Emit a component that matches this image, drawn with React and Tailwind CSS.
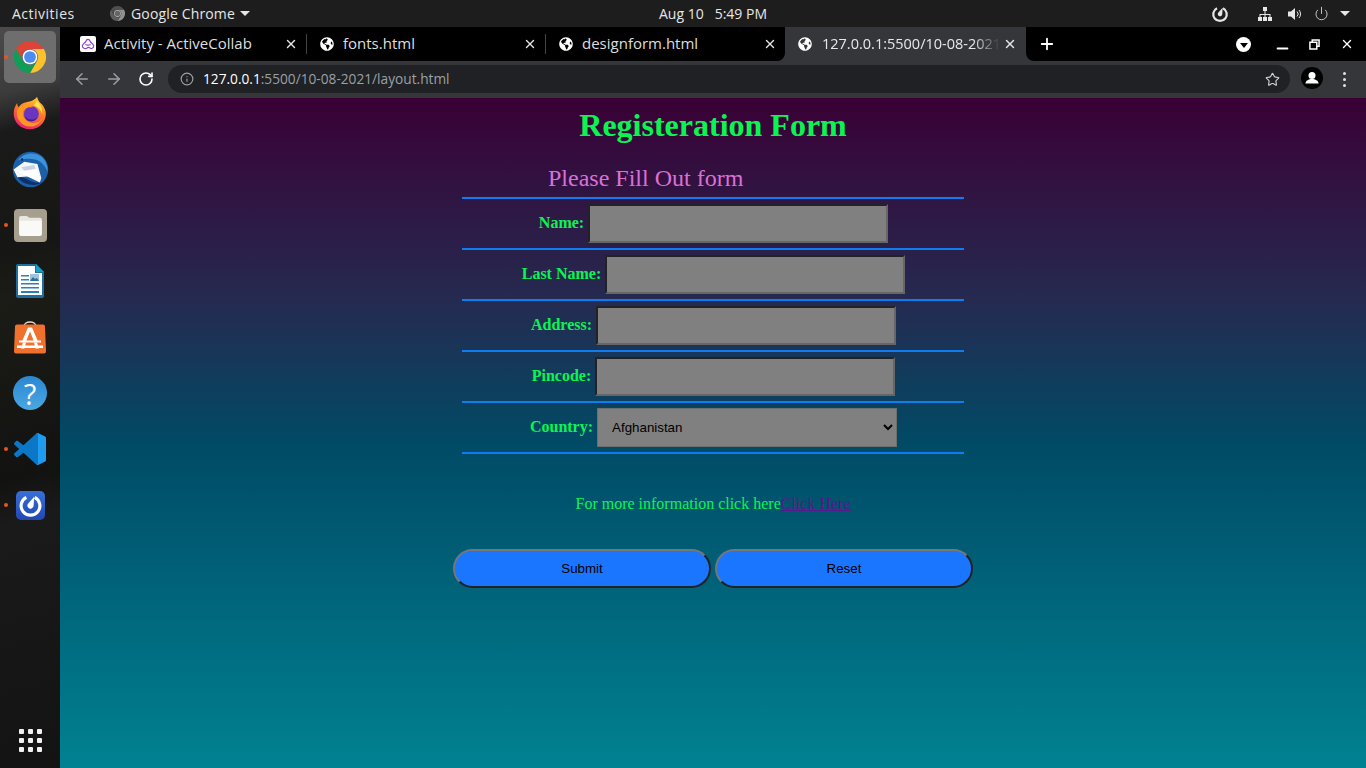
import { ArrowLeft, ArrowRight, Info, Minus, Plus, Power, RotateCw, Star, X } from 'lucide-react'
import { FaGlobeAmericas } from 'react-icons/fa'

const ChromeIcon = ({ className }) => (
  <svg viewBox="0 0 48 48" className={className}>
    <path fill="#db4437" d="M3.2 12A24 24 0 0 1 44.8 12H24A12 12 0 0 0 13.6 30Z" />
    <path fill="#fbc02d" d="M44.8 12A24 24 0 0 1 24 48L34.4 30A12 12 0 0 0 24 12Z" />
    <path fill="#0f9d58" d="M24 48A24 24 0 0 1 3.2 12L13.6 30A12 12 0 0 0 34.4 30Z" />
    <circle cx="24" cy="24" r="11" fill="#fff" />
    <circle cx="24" cy="24" r="8.8" fill="#4a8cf0" />
  </svg>
)

const FirefoxIcon = () => (
  <svg viewBox="0 0 48 48" className="w-[34px] h-[34px]">
    <defs>
      <linearGradient id="ff" x1="0.7" y1="0" x2="0.3" y2="1">
        <stop offset="0" stopColor="#ffd02e" />
        <stop offset="0.45" stopColor="#ff7a25" />
        <stop offset="1" stopColor="#ec1a80" />
      </linearGradient>
    </defs>
    <path fill="url(#ff)" d="M34 1c1 5 3 7 7 11 5 6 6 12 5 17-2 11-11 18-22 18C11 47 1 37 1 25c0-6 2-11 5-15 0 3 1 5 2 6 2-4 5-6 9-7 5-1 13-2 17-8z" />
    <circle cx="26" cy="25" r="10.5" fill="#6a35c0" />
    <path fill="#3f1f9a" d="M16 27c3 6 11 9 19 3-3 5-8 7-13 5-3-1-5-4-6-8z" />
    <path fill="#ff9a1f" d="M6 20c3-5 8-8 15-7 3 0 5 1 7 3-7-1-13 1-14 7-1 8 6 15 14 15 6 0 10-2 13-6-2 6-9 11-17 11C13 43 3 32 6 20z" />
    <path fill="#ffe14a" d="M28 13c6 1 11 5 13 12 1-7-2-14-8-18 0 3-2 5-5 6z" />
  </svg>
)

const ThunderbirdIcon = () => (
  <svg viewBox="0 0 48 48" className="w-[37px] h-[37px]">
    <circle cx="24" cy="24" r="23" fill="#1b5fa8" />
    <path fill="#3c93dc" d="M8 12C14 3 28 0 38 7c6 5 9 13 8 20-3-8-8-14-16-16-8-2-15-1-22 1z" />
    <path fill="#0f2f6b" d="M6 32c4 7 12 12 22 12 4 0 8-1 11-3-8 1-15-1-20-5z" />
    <path fill="#f4f6fa" d="M2 24 16 14l17 3 5 18-2 6-16-8-13 1z" />
    <path fill="#c8d2e2" d="M12 21l17-3 4 13-15-3z" />
    <path fill="#fff" d="M8 27l24-4 5 16-19-7z" />
    <circle cx="13" cy="11" r="1.600" fill="#0f2f6b" />
  </svg>
)

const FilesIcon = () => (
  <div className="w-[33px] h-[33px] rounded-[4px] bg-[#a79f8d] flex items-center justify-center">
    <svg viewBox="0 0 26 22" className="w-[25px] h-[21px]">
      <path fill="#e9e6df" d="M1 3a2 2 0 0 1 2-2h6l3 2h11a2 2 0 0 1 2 2v2H1z" />
      <path fill="#faf9f7" d="M1 6h24v14a2 2 0 0 1-2 2H3a2 2 0 0 1-2-2z" />
    </svg>
  </div>
)

const WriterIcon = () => (
  <svg viewBox="0 0 28 34" className="w-[28px] h-[34px]">
    <path fill="#1d6f9f" d="M0 2a2 2 0 0 1 2-2h18l8 8v24a2 2 0 0 1-2 2H2a2 2 0 0 1-2-2z" />
    <path fill="#fff" d="M2 2h17v7h7v22H2z" />
    <path fill="#18a0c8" d="M20 0l8 8h-8z" />
    <path fill="#2f7fb0" d="M5 11h8v1.500H5zM5 15h8v1.500H5zM5 19h18v1.500H5zM5 23h18v1.500H5zM5 27h18v2H5z" />
    <rect x="14" y="10" width="9" height="7" fill="#9cc4dc" />
    <path fill="#2f6f95" d="M14 17l3-4 2 2 2-1 2 3z" />
  </svg>
)

const StoreIcon = () => (
  <svg viewBox="0 0 34 34" className="w-[34px] h-[35px]">
    <path fill="none" stroke="#e8d6c0" strokeWidth="1.300" d="M11 6c0-6 12-6 12 0" />
    <path fill="#f0702e" d="M2 6a2 2 0 0 1 2-2h26a2 2 0 0 1 2 2l1 25a2 2 0 0 1-2 2H3a2 2 0 0 1-2-2z" />
    <path fill="#fff" d="M15 7h4l6 14h-4l-4-10-4 10H9z" />
    <path fill="#fff" d="M6 20h22v2H6zM4 25h26v2.500H4z" />
    <path fill="#fff" d="M10 22h3l-1.500 6H8zM21 22h3l2 6h-3.500z" />
  </svg>
)

const HelpIcon = () => (
  <div className="w-[34px] h-[34px] rounded-full bg-gradient-to-b from-[#2a86d0] to-[#4aa8e4] flex items-center justify-center text-white text-[29px] leading-none font-['Open_Sans',sans-serif]">
    ?
  </div>
)

const VsCodeIcon = () => (
  <svg viewBox="0 0 100 100" className="w-[32px] h-[32px]">
    <path fill="#0a78c6" d="M70.900 99.300c1.600.6 3.400.6 5-.2l20.600-9.900c2.100-1 3.500-3.200 3.500-5.600V16.400c0-2.400-1.400-4.600-3.500-5.600L75.900.9C73.800-.1 71.300.1 69.500 1.400c-.3.2-.5.4-.7.7L29.400 38 12.200 25c-1.600-1.200-3.800-1.100-5.300.2l-5.500 5c-1.800 1.700-1.800 4.500 0 6.200L16.200 50 1.400 63.600c-1.800 1.700-1.800 4.500 0 6.200l5.500 5c1.500 1.300 3.700 1.400 5.300.2l17.200-13L68.800 97.900c.6.6 1.300 1.100 2.100 1.400zM75 27.300 45.100 50 75 72.700z" />
    <path fill="#1f9cf0" d="M75.900 99.100c-2.400 1.200-5.300.7-7.100-1.200 2.300 2.300 6.200.7 6.200-2.600V4.700c0-3.300-3.900-4.900-6.200-2.600 1.800-1.900 4.700-2.400 7.100-1.200l20.600 9.900c2.100 1 3.500 3.200 3.500 5.600v67.200c0 2.400-1.400 4.600-3.500 5.600z" />
  </svg>
)

const MattermostMark = ({ className, color = '#fff' }) => (
  <svg viewBox="0 0 24 24" className={className}>
    <path fill="none" stroke={color} strokeWidth="3" d="M8 4.200a9 9 0 1 0 8 0" />
    <path fill={color} d="M15.500 3.500 15 12a3 3 0 1 1-5.200-2z" />
  </svg>
)

const MattermostIcon = () => (
  <div className="w-[29px] h-[29px] rounded-[5px] bg-gradient-to-b from-[#3a6fd8] to-[#2148b0] flex items-center justify-center">
    <MattermostMark className="w-[25px] h-[25px]" />
  </div>
)

const CollabIcon = () => (
  <div className="w-4 h-4 rounded-[2px] bg-white flex items-center justify-center">
    <svg viewBox="0 0 16 16" className="w-[14px] h-[14px]">
      <path fill="none" stroke="#8a3fd1" strokeWidth="1.300" d="M1.500 10c1-3 3-3 4-5 1-3 4-3 5 0 1 2 3 2 4 5 0 3-3 4-4.500 2.500-1-1-2-1-3 0C5 14 1.500 13 1.500 10zM5 8.500c2 1 4 1 6 0" />
    </svg>
  </div>
)

const dockApps = [
  { icon: <ChromeIcon className="w-8 h-8" />, running: true, active: true },
  { icon: <FirefoxIcon /> },
  { icon: <ThunderbirdIcon /> },
  { icon: <FilesIcon />, running: true },
  { icon: <WriterIcon /> },
  { icon: <StoreIcon /> },
  { icon: <HelpIcon /> },
  { icon: <VsCodeIcon />, running: true },
  { icon: <MattermostIcon />, running: true },
]

const tabs = [
  { title: 'Activity - ActiveCollab', icon: <CollabIcon /> },
  { title: 'fonts.html' },
  { title: 'designform.html' },
]

const fields = [
  { label: 'Name:', id: 'name' },
  { label: 'Last Name:', id: 'last' },
  { label: 'Address:', id: 'address' },
  { label: 'Pincode:', id: 'pincode' },
]

const Globe = () => <FaGlobeAmericas className="w-[14px] h-[14px] text-white shrink-0" />

const TopBar = () => (
  <div className="h-[27px] shrink-0 bg-[#1d1d1d] text-[#e6e6e6] text-[14px] flex items-center relative">
    <span className="ml-3 w-[98px] tracking-[0.5px]">Activities</span>
    <ChromeIcon className="w-[15px] h-[15px] grayscale opacity-70" />
    <span className="ml-[6px] tracking-[0.15px]">Google Chrome</span>
    <span className="ml-[5px] w-0 h-0 border-x-[5px] border-x-transparent border-t-[5px] border-t-[#e6e6e6]" />
    <div className="flex-1 flex justify-center gap-[11px] pr-[35px]">
      <span>Aug 10</span>
      <span>5:49 PM</span>
    </div>
    <div className="flex items-center pr-4">
      <MattermostMark className="w-[18px] h-[18px]" color="#e6e6e6" />
      <svg viewBox="0 0 16 16" className="w-[16px] h-[16px] ml-[28px]">
        <path fill="#e6e6e6" d="M6 1h4v4H6zM7.500 5h1v3h5v3h-1V9H8.500v2h-1V9H3.500v2h-1V8h5zM1 11h4v4H1zM6 11h4v4H6zM11 11h4v4h-4z" />
      </svg>
      <svg viewBox="0 0 16 16" className="w-[16px] h-[16px] ml-[14px]">
        <path fill="#e6e6e6" d="M1 5.500h3L8 2v12L4 10.500H1z" />
        <path fill="none" stroke="#e6e6e6" strokeWidth="1" d="M10 5.500a3.500 3.500 0 0 1 0 5M12 4a6 6 0 0 1 0 8" />
      </svg>
      <Power className="w-[15px] h-[15px] ml-[11px]" strokeWidth={1.3} />
      <span className="ml-[11px] w-0 h-0 border-x-[5px] border-x-transparent border-t-[5px] border-t-[#e6e6e6]" />
    </div>
  </div>
)

const Dock = () => (
  <aside className="w-[60px] shrink-0 flex flex-col items-center pt-[2px] pb-[16px] bg-[linear-gradient(165deg,#4a4b4a_0%,#3a3b3a_9%,#1a1a1a_14%,#161614_30%,#1b1c16_36%,#121211_60%,#1a1a1a_66%,#131313_100%)]">
    {dockApps.map((app, i) => (
      <div key={i} className="w-[60px] h-[56px] shrink-0 flex items-center justify-center relative">
        {app.active && <div className="absolute left-1 top-[2px] w-[52px] h-[52px] rounded-[5px] bg-[#6d6e6d]" />}
        {app.running && <span className="absolute left-1 top-[26px] w-1 h-1 rounded-full bg-[#e95420]" />}
        <div className="relative">{app.icon}</div>
      </div>
    ))}
    <div className="mt-auto grid grid-cols-3 gap-[4px]">
      {[0, 1, 2, 3, 4, 5, 6, 7, 8].map((n) => (
        <span key={n} className="w-[5px] h-[5px] rounded-[1px] bg-[#f2f2f2]" />
      ))}
    </div>
  </aside>
)

const Tab = ({ title, icon, last }) => (
  <div className={`w-[239px] h-full bg-black flex items-center text-[#dedede] ${last ? 'rounded-br-lg' : ''}`}>
    <div className={`w-full h-[20px] flex items-center pl-3 pr-[8px] ${last ? '' : 'border-r border-r-[#444]'}`}>
      <div className="w-4 flex justify-center">{icon || <Globe />}</div>
      <span className="ml-[8px] flex-1 text-[15px] leading-[20px] -mt-[2px] truncate">{title}</span>
      <X className="w-[14px] h-[14px] text-[#e6e6e6]" strokeWidth={2.4} />
    </div>
  </div>
)

const Browser = () => (
  <div className="shrink-0 font-['Open_Sans',sans-serif]">
    <div className="h-[34px] bg-[#35363a] flex">
      <div className="w-[8px] bg-black" />
      {tabs.map((t, i) => (
        <Tab key={t.title} title={t.title} icon={t.icon} last={i === 2} />
      ))}
      <div className="w-[241px] rounded-t-lg flex items-center pl-[13px] pr-[9px] text-[#e8e8e8]">
        <Globe />
        <span className="ml-[10px] w-[178px] text-[14.5px] whitespace-nowrap overflow-hidden [mask-image:linear-gradient(to_right,black_85%,transparent)]">127.0.0.1:5500/10-08-2021/layout.html</span>
        <X className="w-[14px] h-[14px] ml-auto" strokeWidth={2.4} />
      </div>
      <div className="flex-1 bg-black rounded-bl-lg flex items-center text-white">
        <Plus className="w-[18px] h-[18px] ml-[12px]" strokeWidth={2.4} />
        <span className="ml-[180px] w-[15px] h-[15px] rounded-full bg-white flex items-center justify-center">
          <span className="w-0 h-0 mt-[2px] border-x-[4px] border-x-transparent border-t-[5px] border-t-black" />
        </span>
        <Minus className="w-[17px] h-[17px] ml-[23px] mt-[8px]" strokeWidth={2.5} />
        <svg viewBox="0 0 12 12" className="w-[11px] h-[11px] ml-[18px]">
          <path fill="none" stroke="#fff" strokeWidth="1.600" d="M3.500 3V1h7.500v7H8.500M1 3.500h7.500V11H1z" />
        </svg>
        <X className="w-[14px] h-[14px] ml-[20px]" strokeWidth={2.4} />
      </div>
    </div>
    <div className="h-[37px] bg-[#35363a] flex items-start pt-[4px] text-[#9aa0a6]">
      <ArrowLeft className="w-[18px] h-[18px] ml-[13px] mt-[5px]" strokeWidth={2} />
      <ArrowRight className="w-[18px] h-[18px] ml-[14px] mt-[5px]" strokeWidth={2} />
      <RotateCw className="w-[16px] h-[16px] ml-[15px] mt-[6px] text-white" strokeWidth={2.4} />
      <div className="ml-[14px] w-[1122px] h-[28px] rounded-full bg-[#202124] flex items-center pl-[12px] pr-[10px]">
        <Info className="w-[14px] h-[14px]" strokeWidth={2} />
        <span className="ml-[9px] text-[13.7px]">
          <span className="text-white">127.0.0.1</span>:5500/10-08-2021/layout.html
        </span>
        <Star className="w-[15px] h-[15px] ml-auto text-[#d0d0d0]" strokeWidth={1.8} />
      </div>
      <span className="ml-[11px] mt-[2px] w-[22px] h-[22px] rounded-full bg-black overflow-hidden flex items-center justify-center">
        <svg viewBox="0 0 22 22" className="w-[22px] h-[22px]">
          <circle cx="11" cy="8.500" r="3.500" fill="#fff" />
          <path fill="#fff" d="M4.500 16.500c0-6 13-6 13 0z" />
        </svg>
      </span>
      <div className="ml-[20px] mt-[7px] flex flex-col gap-[3px]">
        <span className="w-[3px] h-[3px] rounded-full bg-[#e0e0e0]" />
        <span className="w-[3px] h-[3px] rounded-full bg-[#e0e0e0]" />
        <span className="w-[3px] h-[3px] rounded-full bg-[#e0e0e0]" />
      </div>
    </div>
  </div>
)

const Row = ({ label, children }) => (
  <>
    <div className="h-[49px] flex items-center justify-center gap-[4px]">
      <label className="pl-[1px] font-bold text-[16px] text-[#0af552] -mt-[1px]">{label}</label>
      {children}
    </div>
    <hr className="h-[2px] border-0 bg-[#0f7cf0]" />
  </>
)

const Page = () => (
  <main className="flex-1 flex flex-col items-center font-['Liberation_Serif',serif] bg-[linear-gradient(#3a0035_0%,#252a50_30%,#004b66_52%,#008292_100%)]">
    <h1 className="mt-[9px] text-[32px] leading-[37px] font-bold text-[#0af552]">Registeration Form</h1>
    <form className="w-[502px] mt-[21px]">
      <p className="pl-[86px] text-[24px] leading-[27px] text-[#da70d6]">Please Fill Out form</p>
      <hr className="mt-[5px] h-[2px] border-0 bg-[#0f7cf0]" />
      {fields.map((f) => (
        <Row key={f.id} label={f.label}>
          <input
            type="text"
            className="w-[300px] h-[39px] bg-[#808080] border-2 border-t-[#222226] border-l-[#222226] border-r-[#666] border-b-[#666]"
          />
        </Row>
      ))}
      <Row label="Country:">
        <select className="w-[300px] h-[39px] bg-[#808080] border border-[#6e6e6e] pl-[10px] text-[13.33px] text-black font-['Liberation_Sans',sans-serif]">
          <option>Afghanistan</option>
        </select>
      </Row>
    </form>
    <p className="mt-[41px] text-[16px] leading-[18px] text-[#0af552]">
      For more information click here
      <a href="#" className="text-[#551a8b] underline">Click Here</a>
    </p>
    <div className="mt-[36px] flex gap-1 font-['Liberation_Sans',sans-serif]">
      <button type="button" className="w-[258px] h-[39px] rounded-full bg-[#1a75ff] text-[13.33px] text-black border-2 border-t-[#767676] border-l-[#767676] border-r-[#222] border-b-[#222]">Submit</button>
      <button type="button" className="w-[258px] h-[39px] rounded-full bg-[#1a75ff] text-[13.33px] text-black border-2 border-t-[#767676] border-l-[#767676] border-r-[#222] border-b-[#222]">Reset</button>
    </div>
  </main>
)

export default function App() {
  return (
    <div className="w-screen h-screen overflow-hidden flex flex-col font-['Open_Sans',sans-serif]">
      <TopBar />
      <div className="flex-1 flex min-h-0">
        <Dock />
        <div className="flex-1 flex flex-col min-w-0">
          <Browser />
          <Page />
        </div>
      </div>
    </div>
  )
}
